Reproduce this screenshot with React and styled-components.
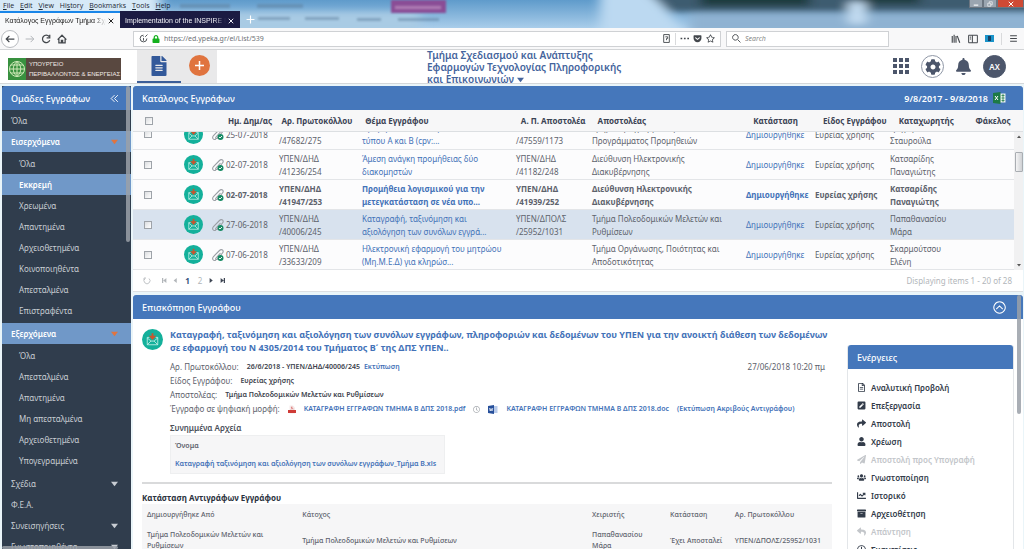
import React from 'react';
import styled, { createGlobalStyle, css } from 'styled-components';
import {
  FaArchive,
  FaBell,
  FaChartLine,
  FaCog,
  FaFileAlt,
  FaGetPocket,
  FaLock,
  FaPaperPlane,
  FaPenSquare,
  FaRegClock,
  FaRegFileAlt,
  FaRegStar,
  FaReply,
  FaShare,
  FaUser,
  FaUsers,
} from 'react-icons/fa';

const colors = {
  blue: '#4577bb',
  lightBlue: '#7098c8',
  link: '#4372b8',
  navy: '#303d4d',
  slate: '#4c566b',
  orange: '#e0743f',
  teal: '#14b09b',
  border: '#dcdfe2',
};

const GlobalStyle = createGlobalStyle`
  * { box-sizing: border-box; }
  body {
    margin: 0;
    overflow: hidden;
    background: #eaf5f9;
    color: #5d626c;
    font: 8px/13px "Noto Sans", "Open Sans", sans-serif;
  }
  button, input { font: inherit; color: inherit; }
  button { padding: 0; border: 0; background: none; display: inline-flex; align-items: center; justify-content: center; }
  h1, h2, h3, p, ul, dl, dd { margin: 0; padding: 0; font-size: inherit; font-weight: inherit; }
  li { list-style: none; }
  a { color: ${colors.link}; text-decoration: none; }
  svg { display: block; flex: none; }
`;

const Page = styled.div`
  display: flex;
  flex-direction: column;
  height: 100vh;
`;

/* ---------- browser window ---------- */

const TitleArea = styled.div`
  position: relative;
  flex: none;
  overflow: hidden;
  background: linear-gradient(#5f9bcb, #a9cdea);
`;

const Wallpaper = styled.svg`
  position: absolute;
  inset: 0;
  width: 100%;
  height: 100%;
`;

const MenuBar = styled.div`
  position: relative;
  display: flex;
  align-items: center;
  height: 11px;
  padding-left: 3px;
  gap: 6px;
  font: 7px/11px "Open Sans", sans-serif;
  color: #1c2733;
  u { text-underline-offset: 1px; }
`;

const WindowButtons = styled.div`
  display: flex;
  align-self: flex-start;
  margin-left: auto;
`;

const WindowButton = styled.button`
  width: ${p => (p.$close ? 27 : 14)}px;
  height: 8px;
  border: 1px solid #6b7580;
  border-top: 0;
  background: ${p => (p.$close ? '#cf4a35' : '#9aa5b0')};
  color: #fff;
`;

const TabBar = styled.div`
  position: relative;
  display: flex;
  height: 17px;
`;

const Tab = styled.div`
  display: flex;
  align-items: center;
  width: 120px;
  padding: 0 6px 0 5px;
  gap: 2px;
  font: 7px/13px "Liberation Sans", sans-serif;
  background: ${p => (p.$active ? '#f8f9fa' : '#1b1b42')};
  color: ${p => (p.$active ? '#222' : '#f1f1f6')};
  border-top: 2px solid ${p => (p.$active ? '#1a86e8' : '#1b1b42')};
`;

const TabLabel = styled.span`
  flex: 1;
  overflow: hidden;
  white-space: nowrap;
  mask-image: linear-gradient(90deg, #000 88%, transparent);
`;

const NewTab = styled.button`
  width: 20px;
  color: #fff;
`;

const NavBar = styled.div`
  display: flex;
  flex: none;
  align-items: center;
  height: 22px;
  padding: 0 6px 0 1px;
  background: #f8f8f9;
  border-bottom: 1px solid #d3d5d7;
  color: #43474c;
`;

const NavButtons = styled.div`
  display: flex;
  align-items: center;
  flex: none;
  gap: 6px;
  width: 132px;
  button:disabled { color: #b3b6ba; }
`;

const BackButton = styled.button`
  width: 18px;
  height: 18px;
  border: 1px solid #b9bcc0;
  border-radius: 50%;
  background: #fff;
`;

const Field = styled.label`
  display: flex;
  align-items: center;
  height: 16px;
  padding: 0 5px;
  gap: 4px;
  background: #fff;
  border: 1px solid #cfd1d4;
  flex: ${p => (p.$search ? '0 1 163px' : '1')};
  margin-right: ${p => (p.$search ? 0 : 5)}px;
  input {
    flex: 1;
    min-width: 0;
    padding: 0;
    border: 0;
    outline: 0;
    background: none;
    font-size: 7px;
    color: #6d7176;
  }
  input::placeholder { font-style: italic; color: #888; opacity: 1; }
`;

const Divider = styled.span`
  width: 1px;
  height: 12px;
  background: #d9dadc;
`;

const Tools = styled.div`
  display: flex;
  align-items: center;
  justify-content: flex-end;
  flex: none;
  gap: 7px;
  width: 129px;
`;

/* ---------- application header ---------- */

const Header = styled.header`
  display: flex;
  flex: none;
  align-items: center;
  height: 34px;
  padding: 0 18px 0 8px;
  background: #fff;
  border-bottom: 1px solid #d5d8da;
`;

const Logo = styled.div`
  display: flex;
  flex: none;
  width: 113px;
  height: 22px;
  margin: 4px 16px 0 0;
  background: #594840;
  color: #f1ebe6;
`;

const LogoText = styled.div`
  padding: 1px 3px;
  font: 6px/10px "Liberation Sans", sans-serif;
  white-space: nowrap;
`;

const HeaderTabs = styled.nav`
  display: flex;
  align-self: stretch;
  background: #e9e9ea;
`;

const HeaderTab = styled.button`
  width: ${p => (p.$active ? 44 : 36)}px;
  border-bottom: 2px solid ${p => (p.$active ? '#3c5f98' : 'transparent')};
  color: #33599a;
`;

const AddCircle = styled.span`
  display: flex;
  align-items: center;
  justify-content: center;
  width: 21px;
  height: 21px;
  border-radius: 50%;
  background: ${colors.orange};
`;

const Department = styled.button`
  display: block;
  width: 256px;
  margin: 0 auto;
  text-align: left;
  font-size: 10px;
  font-weight: 600;
  line-height: 12px;
  color: #44649c;
  svg { display: inline-block; }
`;

const HeaderIcons = styled.div`
  display: flex;
  align-items: center;
  gap: 11px;
  color: ${colors.slate};
`;

const Round = styled.button`
  width: 23px;
  height: 23px;
  border-radius: 50%;
  border: 1px solid #8f97a6;
  ${p => p.$solid && css`
    border-color: ${colors.slate};
    background: ${colors.slate};
    color: #fff;
    font-weight: 600;
  `}
`;

/* ---------- layout ---------- */

const Body = styled.div`
  display: flex;
  flex: 1;
  min-height: 0;
  gap: 2px;
  padding: 2px 1px 0 2px;
`;

const PanelHeader = styled.div`
  display: flex;
  flex: none;
  align-items: center;
  height: 24px;
  padding: 0 9px;
  border-radius: 3px 3px 0 0;
  background: ${colors.blue};
  color: #fff;
  font-size: 9px;
  font-weight: 500;
  h2 { flex: 1; }
`;

const Sidebar = styled.aside`
  position: relative;
  flex: none;
  width: 129px;
  overflow: hidden;
  background: ${colors.navy};
  color: #c8cdd3;
`;

const CollapseButton = styled.button`
  margin-right: 3px;
`;

const Item = styled.a`
  display: flex;
  align-items: center;
  justify-content: space-between;
  height: 21px;
  padding: 0 13px 0 ${p => (p.$sub ? 17 : 9)}px;
  color: #c8cdd3;
  ${p => p.$active && css`
    background: ${colors.lightBlue};
    color: #fff;
    font-weight: 600;
  `}
`;

const SubList = styled.ul`
  padding: 1px 0 2px;
`;

const Thumb = styled.span`
  position: absolute;
  border-radius: 2px;
  background: #9aa0a8;
  opacity: 0.85;
`;

const SideThumb = styled(Thumb)`
  top: 0;
  right: 1px;
  width: 4px;
  height: 156px;
`;

const BottomThumb = styled(Thumb)`
  bottom: 0;
  left: 0;
  width: 90%;
  height: 3px;
`;

const PreviewThumb = styled(Thumb)`
  top: 0;
  right: 2px;
  width: 4px;
  height: 119px;
`;

const Main = styled.main`
  display: flex;
  flex: 1;
  flex-direction: column;
  min-width: 0;
  gap: 3px;
`;

/* ---------- document list ---------- */

const ListPanel = styled.section`
  flex: none;
  background: #fff;
  border-bottom: 1px solid ${colors.border};
`;

const DateRange = styled.span`
  display: flex;
  align-items: center;
  gap: 5px;
  padding-right: 8px;
  font-size: 9px;
  font-weight: 600;
`;

const Grid = styled.table`
  width: 100%;
  table-layout: fixed;
  border-collapse: collapse;
  th, td { padding: 0 0 0 3px; text-align: left; white-space: nowrap; }
  th { height: 21px; background: #f7f7f8; color: #3b4354; font-weight: 700; padding-left: 4px; }
  input {
    display: block;
    appearance: none;
    width: 8px;
    height: 8px;
    margin: 0 0 0 8px;
    border: 1px solid #9ea3a9;
    background: linear-gradient(135deg, #dcdee1, #fff);
  }
`;

const ScrollRow = styled.div`
  display: flex;
  height: 139px;
  border-top: 1px solid ${colors.border};
`;

/* scrolled to the end of the visible rows, so the first one is cut at its top */
const Rows = styled.div`
  display: flex;
  flex: 1;
  flex-direction: column;
  justify-content: flex-end;
  min-width: 0;
  overflow: hidden;
`;

const Row = styled.tr`
  height: 30px;
  background: ${p => (p.$selected ? '#d8e2ee' : '#fcfcfd')};
  font-weight: ${p => (p.$unread ? 700 : 400)};
  border-bottom: 1px solid #e3e5e8;
`;

const ScrollTrack = styled.div`
  display: flex;
  flex-direction: column;
  align-items: center;
  width: 9px;
  padding: 3px 0;
  background: #f1f1f2;
  color: #555;
`;

const ScrollThumb = styled.span`
  width: 8px;
  height: 20px;
  margin: 13px 0 auto;
  border: 1px solid #a9adb2;
  border-radius: 1px;
  background: linear-gradient(90deg, #f4f4f5, #cfd1d4);
`;

const Pager = styled.div`
  display: flex;
  align-items: center;
  height: 21px;
  padding: 0 11px 0 9px;
  gap: 5px;
  color: #b2b6ba;
  p { margin-left: auto; }
  strong { color: #34507c; }
`;

const PagerButton = styled.button`
  width: ${p => (p.$wide ? 9 : 6)}px;
  height: 12px;
  color: ${p => (p.$enabled ? '#3e4654' : '#b2b6ba')};
`;

/* ---------- document preview ---------- */

const PreviewPanel = styled.section`
  position: relative;
  display: flex;
  flex: 1;
  flex-direction: column;
  min-height: 0;
  overflow: hidden;
  background: #fff;
`;

const PreviewBody = styled.div`
  display: flex;
  align-items: flex-start;
  gap: 15px;
  padding: 9px 9px 0;
`;

const Document = styled.div`
  flex: 1;
  min-width: 0;
`;

const DocumentTop = styled.div`
  display: flex;
  align-items: flex-start;
  gap: 7px;
  > div { flex: 1; min-width: 0; }
  > svg { margin-top: 1px; }
`;

const DocumentTitle = styled.h3`
  margin-bottom: 6px;
  font-size: 9px;
  font-weight: 700;
  color: ${colors.link};
`;

const Meta = styled.dl`
  line-height: 14px;
  > div { display: flex; align-items: center; gap: 8px; }
  dd { display: flex; align-items: center; gap: 4px; color: #3c424c; font-size: 7px; font-weight: 600; }
  time { margin-left: auto; padding-right: 7px; }
`;

const Files = styled.span`
  display: flex;
  align-items: center;
  gap: 8px;
  white-space: nowrap;
`;

const AttachTitle = styled.h3`
  margin-top: 5px;
  font-size: 8px;
  line-height: 14px;
  font-weight: 600;
  color: #4a505a;
`;

const Attachments = styled.table`
  border-collapse: collapse;
  background: #f6f6f7;
  font-size: 7px;
  border: 1px solid #eeeff0;
  th, td { height: 19px; padding: 0 8px 0 4px; text-align: left; font-weight: 600; }
`;

const Rule = styled.hr`
  height: 2px;
  margin: 8px 0 7px;
  border: 0;
  background: #d9dadb;
`;

const CopiesTitle = styled.h3`
  font-weight: 700;
  color: #2c3340;
`;

const Copies = styled.table`
  width: 100%;
  table-layout: fixed;
  border-collapse: collapse;
  background: #f6f6f7;
  font-size: 7px;
  line-height: 11px;
  th, td { padding: 0 5px; text-align: left; font-weight: 500; }
  th { height: 20px; }
  td { height: 32px; }
`;

const Actions = styled.aside`
  flex: none;
  width: 167px;
  margin-top: 17px;
  border: 1px solid #e3e6e9;
  border-top: 0;
  border-radius: 3px;
`;

const ActionList = styled.div`
  display: flex;
  flex-direction: column;
  padding: 9px 9px 0;
`;

const Action = styled.button`
  justify-content: flex-start;
  gap: 5px;
  height: 18px;
  font-weight: 600;
  color: #333c4a;
  &:disabled { color: #c3c6ca; }
`;

/* ---------- icons ---------- */

const Stroke = ({ size = 10, d, width = 1.6, box = 16 }) => (
  <svg width={size} height={size} viewBox={`0 0 ${box} ${box}`} fill="none" stroke="currentColor" strokeWidth={width} aria-hidden="true">
    <path d={d} />
  </svg>
);

const Triangle = ({ d = 'M0 2h8L4 7z', size = 7, color = 'currentColor' }) => (
  <svg width={size} height={size} viewBox="0 0 8 8" aria-hidden="true">
    <path d={d} fill={color} />
  </svg>
);

const CloseIcon = () => <Stroke size={6} d="M2 2l12 12M14 2L2 14" width={2.6} />;

const MailIcon = ({ size = 20 }) => (
  <svg width={size} height={size} viewBox="0 0 40 40" fill="none" aria-hidden="true">
    <circle cx="20" cy="20" r="20" fill={colors.teal} />
    <path d="M14 16h-4v14h20V16h-4M10 17l7 6h6l7-6M10 30l7-7M30 30l-7-7" stroke="#c5efe7" strokeWidth="1.6" />
    <path d="M20 8v10" stroke="#c9552e" strokeWidth="3.5" />
    <path d="M13 13h14l-7 8z" fill="#c9552e" />
  </svg>
);

const ClipIcon = () => (
  <svg width="12" height="14" viewBox="0 0 24 28" fill="none" aria-hidden="true">
    <path d="M17 10L8 20c-2 3 1 4 3 2L21 10c4-5-2-9-6-5L3 17c-4 5 0 10 5 7" stroke="#9a9ea4" strokeWidth="2.200" />
    <circle cx="17" cy="20" r="6" fill="#178a64" />
    <path d="M14 20l2 2 4-4" stroke="#fff" strokeWidth="1.8" />
  </svg>
);

const GlobeLogo = () => (
  <svg width="18" height="22" viewBox="0 0 36 44" fill="none" aria-hidden="true">
    <path fill="#38913f" d="M0 0h36v44H0z" />
    <g stroke="#cfe9b8" strokeWidth="2">
      <circle cx="18" cy="22" r="15" />
      <path d="M18 7v30M3 22h30M6 14h24M6 30h24M18 7c-10 9-10 21 0 30M18 7c10 9 10 21 0 30" />
    </g>
  </svg>
);

const ExcelIcon = () => (
  <svg width="13" height="12" viewBox="0 0 26 24" aria-hidden="true">
    <path fill="#e9f3ec" d="M14 3h11v18H14z" />
    <path fill="#1d7a45" d="M0 2l15-2v24L0 22z" />
    <path d="M17 7h6M17 12h6M17 17h6M20 4v16" stroke="#1d7a45" strokeWidth="1.5" />
    <path d="M4 8l6 8M10 8l-6 8" stroke="#fff" strokeWidth="2" />
  </svg>
);

const WordIcon = () => (
  <svg width="10" height="9" viewBox="0 0 20 18" aria-hidden="true">
    <path fill="#b9cbea" d="M10 2h9v14h-9z" />
    <path fill="#27509b" d="M0 2l12-2v18L0 16z" />
    <path d="M3 6l1.500 6L6 7l2 5 1.500-6" fill="none" stroke="#fff" strokeWidth="1.400" />
  </svg>
);

const PdfIcon = () => (
  <svg width="8" height="9" viewBox="0 0 16 18" aria-hidden="true">
    <path fill="#f5eaea" d="M3 1h7l4 4v12H3z" />
    <path fill="#cf3b37" d="M0 10h16v6H0z" />
    <path d="M6 9c3-3 2-7 1-5s2 4 4 4" fill="none" stroke="#cf3b37" />
  </svg>
);

const AppsIcon = () => (
  <svg width="17" height="17" viewBox="0 0 17 17" fill="currentColor" aria-hidden="true">
    {[0, 6, 12].map(y => [0, 6, 12].map(x => <rect key={`${x}-${y}`} x={x} y={y} width="4" height="4" />))}
  </svg>
);

/* ---------- data ---------- */

const menus = ['File', 'Edit', 'View', 'History', 'Bookmarks', 'Tools', 'Help'];
const accelerators = { History: 2 };

const incoming = ['Όλα', 'Εκκρεμή', 'Χρεωμένα', 'Απαντημένα', 'Αρχειοθετημένα', 'Κοινοποιηθέντα', 'Απεσταλμένα', 'Επιστραφέντα'];
const outgoing = ['Όλα', 'Απεσταλμένα', 'Απαντημένα', 'Μη απεσταλμένα', 'Αρχειοθετημένα', 'Υπογεγραμμένα'];

const columns = [
  [48, ''], [28, ''], [14, ''], [53, 'Ημ. Δημ/ας'], [83, 'Αρ. Πρωτοκόλλου'], [154, 'Θέμα Εγγράφου'],
  [76, 'Α. Π. Αποστολέα'], [154, 'Αποστολέας'], [69, 'Κατάσταση'], [75, 'Είδος Εγγράφου'],
  [76, 'Καταχωρητής'], [51, 'Φάκελος'],
];
const totalWidth = columns.reduce((sum, [w]) => sum + w, 0);

const documents = [
  {
    date: '25-07-2018', protocol: ['ΥΠΕΝ/ΔΗΔ', '/47682/275'], subject: ['Προμήθεια αναλωσίμων υλικών', 'τύπου Α και Β (cpv:...'],
    senderNo: ['ΥΠΕΝ/ΔΗΔ', '/47559/1173'], sender: ['Τμήμα Προγραμματισμού και', 'Προγράμματος Προμηθειών'], clerk: ['Γρηγορίου', 'Σταυρούλα'],
  },
  {
    date: '02-07-2018', protocol: ['ΥΠΕΝ/ΔΗΔ', '/41236/254'], subject: ['Άμεση ανάγκη προμήθειας δύο', 'διακομηστών'],
    senderNo: ['ΥΠΕΝ/ΔΗΔ', '/41182/248'], sender: ['Διεύθυνση Ηλεκτρονικής', 'Διακυβέρνησης'], clerk: ['Κατσαρίδης', 'Παναγιώτης'],
  },
  {
    unread: true,
    date: '02-07-2018', protocol: ['ΥΠΕΝ/ΔΗΔ', '/41947/253'], subject: ['Προμήθεια λογισμικού για την', 'μετεγκατάσταση σε νέα υπο...'],
    senderNo: ['ΥΠΕΝ/ΔΗΔ', '/41939/252'], sender: ['Διεύθυνση Ηλεκτρονικής', 'Διακυβέρνησης'], clerk: ['Κατσαρίδης', 'Παναγιώτης'],
  },
  {
    selected: true,
    date: '27-06-2018', protocol: ['ΥΠΕΝ/ΔΗΔ', '/40006/245'], subject: ['Καταγραφή, ταξινόμηση και', 'αξιολόγηση των συνόλων εγγρά...'],
    senderNo: ['ΥΠΕΝ/ΔΠΟΛΣ', '/25952/1031'], sender: ['Τμήμα Πολεοδομικών Μελετών και', 'Ρυθμίσεων'], clerk: ['Παπαθανασίου', 'Μάρα'],
  },
  {
    date: '07-06-2018', protocol: ['ΥΠΕΝ/ΔΗΔ', '/33633/209'], subject: ['Ηλεκτρονική εφαρμογή του μητρώου', '(Μη.Μ.Ε.Δ) για κληρώσ...'],
    senderNo: [], sender: ['Τμήμα Οργάνωσης, Ποιότητας και', 'Αποδοτικότητας'], clerk: ['Σκαρμούτσου', 'Ελένη'],
  },
];

const actions = [
  [FaRegFileAlt, 'Αναλυτική Προβολή'],
  [FaPenSquare, 'Επεξεργασία'],
  [FaShare, 'Αποστολή'],
  [FaUser, 'Χρέωση'],
  [FaPaperPlane, 'Αποστολή προς Υπογραφή', true],
  [FaUsers, 'Γνωστοποίηση'],
  [FaChartLine, 'Ιστορικό'],
  [FaArchive, 'Αρχειοθέτηση'],
  [FaReply, 'Απάντηση', true],
  [FaRegClock, 'Συσχετίσεις'],
];

/* ---------- parts ---------- */

const Lines = ({ of: lines }) => lines.map(line => <div key={line}>{line}</div>);

const Columns = () => (
  <colgroup>
    {columns.map(([w], i) => <col key={i} style={{ width: `${(w / totalWidth) * 100}%` }} />)}
  </colgroup>
);

const BrowserWindow = () => (
  <>
    <TitleArea>
      <Wallpaper viewBox="0 0 1024 28" preserveAspectRatio="none" aria-hidden="true">
        <defs>
          <filter id="soft" x="-20%" y="-60%" width="140%" height="220%"><feGaussianBlur stdDeviation="6 3" /></filter>
          <filter id="faint"><feGaussianBlur stdDeviation="1" /></filter>
        </defs>
        <g filter="url(#soft)">
          <path fill="#d6e9f7" d="M-20-10h180v40H-20z" />
          <path fill="#a9cbe4" d="M160 12h260v20H160z" />
          <path fill="#bcd9f1" d="M600-10h50l40 50h-90z" />
          <path fill="#3d5c70" d="M645-10h400v22H670z" />
          <path fill="#8fb2d2" d="M690 14h360v20H690z" />
          <path fill="#1f3a3c" d="M700-8h110v14H700zM860-8h60v12h-60z" />
          <path fill="#c3dcf1" d="M848 2h18v22h-18z" />
        </g>
        <g filter="url(#faint)">
          <path fill="#8a4d96" d="M391 0h55v13h-55z" />
          <path fill="#5b7f9e" opacity=".5" d="M257 4h46v4h-46zM180 4h50v4h-50zM258 17h32v3h-32zM305 17h34v3h-34zM357 18h24v3h-24zM398 18h41v3h-41z" />
          <path fill="#c79ac8" opacity=".6" d="M395 6h46v3h-46z" />
        </g>
      </Wallpaper>
      <MenuBar>
        {menus.map(name => {
          const at = accelerators[name] || 0;
          return <span key={name}>{name.slice(0, at)}<u>{name[at]}</u>{name.slice(at + 1)}</span>;
        })}
        <WindowButtons>
          <WindowButton aria-label="Minimize"><Stroke size={6} d="M2 11h12" width={3} /></WindowButton>
          <WindowButton aria-label="Restore"><Stroke size={6} d="M2 6h8v8H2zM6 6V2h8v8h-4" /></WindowButton>
          <WindowButton aria-label="Close window" $close><CloseIcon /></WindowButton>
        </WindowButtons>
      </MenuBar>
      <TabBar>
        <Tab $active>
          <TabLabel>Κατάλογος Εγγράφων Τμήμα Σχεδ</TabLabel>
          <button aria-label="Close tab"><CloseIcon /></button>
        </Tab>
        <Tab>
          <TabLabel>Implementation of the INSPIRE Dire</TabLabel>
          <button aria-label="Close tab"><CloseIcon /></button>
        </Tab>
        <NewTab aria-label="New tab"><Stroke size={9} d="M8 1v14M1 8h14" width={2} /></NewTab>
      </TabBar>
    </TitleArea>
    <NavBar>
      <NavButtons>
        <BackButton aria-label="Back"><Stroke d="M15 8H2M7 3L2 8l5 5" width={2} /></BackButton>
        <button aria-label="Forward" disabled><Stroke d="M1 8h13M9 3l5 5-5 5" /></button>
        <button aria-label="Reload"><Stroke d="M13 4A6 6 0 1 0 14 10M14 1v5H9" width={2} /></button>
        <button aria-label="Home"><Stroke d="M1 9l7-7 7 7M3 8v6h10V8M7 14v-4h2v4" width={2} /></button>
      </NavButtons>
      <Field>
        <Stroke size={9} d="M8 2a6 6 0 1 0 6 6M8 7v5M8 4v1M11 5l4-4" />
        <FaLock size={8} color="#14b01d" />
        <input aria-label="Address" defaultValue="https://ed.ypeka.gr/el/List/539" />
        <Stroke size={9} d="M3 1h10v14H3zM6 5h4v3H8v3" />
        <Divider />
        <Stroke size={9} d="M1 8h3M7 8h3M13 8h3" width={2.6} />
        <FaGetPocket size={9} />
        <FaRegStar size={9} />
      </Field>
      <Field $search>
        <Stroke size={9} d="M10 10l5 5M6 1a5 5 0 1 0 .1 0" />
        <input aria-label="Search" placeholder="Search" />
      </Field>
      <Tools>
        <Stroke d="M2 3v11M5 1v13M8 3v11M10 3l4 11" width={1.8} />
        <Stroke d="M1 2h14v12H1zM7 2v12M3 5h2M3 8h2" />
        <svg width="9" height="7" viewBox="0 0 9 7" aria-hidden="true">
          <path fill="#1a93c9" d="M0 0h9v7H0z" /><path fill="#173f63" d="M3 1h3v5H3z" />
        </svg>
        <Divider />
        <Stroke size={9} d="M2 3h12M2 8h12M2 13h12" width={1.8} />
      </Tools>
    </NavBar>
  </>
);

const AppHeader = () => (
  <Header>
    <Logo>
      <GlobeLogo />
      <LogoText>ΥΠΟΥΡΓΕΙΟ<br />ΠΕΡΙΒΑΛΛΟΝΤΟΣ &amp; ΕΝΕΡΓΕΙΑΣ</LogoText>
    </Logo>
    <HeaderTabs>
      <HeaderTab $active aria-label="Έγγραφα"><FaFileAlt size={20} /></HeaderTab>
      <HeaderTab aria-label="Νέο">
        <AddCircle><svg width="11" height="11" viewBox="0 0 11 11"><path d="M5.500 1v9M1 5.500h9" stroke="#fff" strokeWidth="1.500" /></svg></AddCircle>
      </HeaderTab>
    </HeaderTabs>
    <Department>
      Τμήμα Σχεδιασμού και Ανάπτυξης<br />
      Εφαρμογών Τεχνολογίας Πληροφορικής<br />
      και Επικοινωνιών <Triangle size={7} />
    </Department>
    <HeaderIcons>
      <button aria-label="Εφαρμογές"><AppsIcon /></button>
      <Round aria-label="Ρυθμίσεις"><FaCog size={16} /></Round>
      <button aria-label="Ειδοποιήσεις"><FaBell size={17} /></button>
      <Round $solid>AX</Round>
    </HeaderIcons>
  </Header>
);

const Group = ({ title, items, active }) => (
  <li>
    <Item href="#" $active>{title}<Triangle color={colors.orange} /></Item>
    <SubList>
      {items.map(name => <li key={name}><Item href="#" $sub $active={name === active}>{name}</Item></li>)}
    </SubList>
  </li>
);

const Groups = () => (
  <Sidebar>
    <PanelHeader>
      <h2>Ομάδες Εγγράφων</h2>
      <CollapseButton aria-label="Σύμπτυξη"><Stroke size={9} d="M8 2L2 8l6 6M14 2L8 8l6 6" /></CollapseButton>
    </PanelHeader>
    <ul>
      <li><Item href="#">Όλα</Item></li>
      <Group title="Εισερχόμενα" items={incoming} active="Εκκρεμή" />
      <Group title="Εξερχόμενα" items={outgoing} />
      <li><Item href="#">Σχέδια<Triangle /></Item></li>
      <li><Item href="#">Φ.Ε.Α.</Item></li>
      <li><Item href="#">Συνεισηγήσεις<Triangle /></Item></li>
      <li><Item href="#">Γνωστοποιηθέντα<Triangle /></Item></li>
    </ul>
    <SideThumb />
    <BottomThumb />
  </Sidebar>
);

const DocumentRow = ({ doc }) => (
  <Row $selected={doc.selected} $unread={doc.unread}>
    <td><input type="checkbox" aria-label={doc.protocol.join('')} /></td>
    <td><MailIcon size={19} /></td>
    <td><ClipIcon /></td>
    <td>{doc.date}</td>
    <td><Lines of={doc.protocol} /></td>
    <td><a href="#"><Lines of={doc.subject} /></a></td>
    <td><Lines of={doc.senderNo} /></td>
    <td><Lines of={doc.sender} /></td>
    <td><a href="#">Δημιουργήθηκε</a></td>
    <td>Ευρείας χρήσης</td>
    <td><Lines of={doc.clerk} /></td>
    <td />
  </Row>
);

const DocumentList = () => (
  <ListPanel>
    <PanelHeader>
      <h2>Κατάλογος Εγγράφων</h2>
      <DateRange>9/8/2017 - 9/8/2018 <ExcelIcon /></DateRange>
    </PanelHeader>
    <Grid>
      <Columns />
      <thead>
        <tr>
          {columns.map(([, title], i) => (
            <th key={i}>{i === 0 ? <input type="checkbox" aria-label="Επιλογή όλων" /> : title}</th>
          ))}
        </tr>
      </thead>
    </Grid>
    <ScrollRow>
      <Rows>
        <Grid>
          <Columns />
          <tbody>
            {documents.map(doc => <DocumentRow key={doc.protocol[1]} doc={doc} />)}
          </tbody>
        </Grid>
      </Rows>
      <ScrollTrack>
        <Triangle size={4} d="M0 6h8L4 1z" />
        <ScrollThumb />
        <Triangle size={4} />
      </ScrollTrack>
    </ScrollRow>
    <Pager>
      <PagerButton $wide aria-label="Ανανέωση"><Stroke size={8} d="M12 3A6 6 0 1 1 4 3M4 0v4H0" /></PagerButton>
      <span />
      <PagerButton aria-label="Πρώτη"><Triangle size={5} d="M0 0h2v8H0zM7 0v8L2 4z" /></PagerButton>
      <PagerButton aria-label="Προηγούμενη"><Triangle size={5} d="M6 0v8L1 4z" /></PagerButton>
      <PagerButton $wide><strong>1</strong></PagerButton>
      <PagerButton>2</PagerButton>
      <PagerButton $enabled aria-label="Επόμενη"><Triangle size={5} d="M1 0v8l5-4z" /></PagerButton>
      <PagerButton $enabled aria-label="Τελευταία"><Triangle size={5} d="M1 0v8l5-4zM6 0h2v8H6z" /></PagerButton>
      <p>Displaying items 1 - 20 of 28</p>
    </Pager>
  </ListPanel>
);

const CopiesTable = () => (
  <Copies>
    <colgroup>
      {['22.5%', '42%', '11.3%', '9.4%', '14.8%'].map((width, i) => <col key={i} style={{ width }} />)}
    </colgroup>
    <thead>
      <tr><th>Δημιουργήθηκε Από</th><th>Κάτοχος</th><th>Χειριστής</th><th>Κατάσταση</th><th>Αρ. Πρωτοκόλλου</th></tr>
    </thead>
    <tbody>
      <tr>
        <td>Τμήμα Πολεοδομικών Μελετών και<br />Ρυθμίσεων</td>
        <td>Τμήμα Πολεοδομικών Μελετών και Ρυθμίσεων</td>
        <td>Παπαθανασίου<br />Μάρα</td>
        <td>Έχει Αποσταλεί</td>
        <td>ΥΠΕΝ/ΔΠΟΛΣ/25952/1031</td>
      </tr>
    </tbody>
  </Copies>
);

const Preview = () => (
  <PreviewPanel>
    <PanelHeader>
      <h2>Επισκόπηση Εγγράφου</h2>
      <DateRange as="button" aria-label="Σύμπτυξη"><Stroke size={13} d="M8 1a7 7 0 1 0 .1 0M4 10l4-4 4 4" width={1.3} /></DateRange>
    </PanelHeader>
    <PreviewBody>
      <Document>
        <DocumentTop>
          <MailIcon size={21} />
          <div>
            <DocumentTitle>
              Καταγραφή, ταξινόμηση και αξιολόγηση των συνόλων εγγράφων, πληροφοριών και δεδομένων του ΥΠΕΝ για την ανοικτή διάθεση των δεδομένων<br />
              σε εφαρμογή του Ν 4305/2014 του Τμήματος Β΄ της ΔΠΣ ΥΠΕΝ..
            </DocumentTitle>
            <Meta>
              <div>
                <dt>Αρ. Πρωτοκόλλου:</dt>
                <dd>26/6/2018 - ΥΠΕΝ/ΔΗΔ/40006/245 <a href="#">Εκτύπωση</a></dd>
                <time>27/06/2018 10:20 πμ</time>
              </div>
              <div><dt>Είδος Εγγράφου:</dt><dd>Ευρείας χρήσης</dd></div>
              <div><dt>Αποστολέας:</dt><dd>Τμήμα Πολεοδομικών Μελετών και Ρυθμίσεων</dd></div>
              <div>
                <dt>Έγγραφο σε ψηφιακή μορφή:</dt>
                <dd>
                  <Files>
                    <PdfIcon />
                    <a href="#">ΚΑΤΑΓΡΑΦΗ ΕΓΓΡΑΦΩΝ ΤΜΗΜΑ Β ΔΠΣ 2018.pdf</a>
                    <FaRegClock size={7} color="#a5a9ae" />
                    <WordIcon />
                    <a href="#">ΚΑΤΑΓΡΑΦΗ ΕΓΓΡΑΦΩΝ ΤΜΗΜΑ Β ΔΠΣ 2018.doc</a>
                    <a href="#">(Εκτύπωση Ακριβούς Αντιγράφου)</a>
                  </Files>
                </dd>
              </div>
            </Meta>
            <AttachTitle>Συνημμένα Αρχεία</AttachTitle>
            <Attachments>
              <thead><tr><th>Όνομα</th></tr></thead>
              <tbody><tr><td><a href="#">Καταγραφή ταξινόμηση και αξιολόγηση των συνόλων εγγράφων_Τμήμα Β.xls</a></td></tr></tbody>
            </Attachments>
          </div>
        </DocumentTop>
        <Rule />
        <CopiesTitle>Κατάσταση Αντιγράφων Εγγράφου</CopiesTitle>
        <CopiesTable />
      </Document>
      <Actions>
        <PanelHeader><h2>Ενέργειες</h2></PanelHeader>
        <ActionList>
          {actions.map(([Icon, label, disabled]) => (
            <Action key={label} disabled={disabled}><Icon size={9} />{label}</Action>
          ))}
        </ActionList>
      </Actions>
    </PreviewBody>
    <PreviewThumb />
  </PreviewPanel>
);

const App = () => (
  <Page>
    <GlobalStyle />
    <BrowserWindow />
    <AppHeader />
    <Body>
      <Groups />
      <Main>
        <DocumentList />
        <Preview />
      </Main>
    </Body>
  </Page>
);

export default App;
